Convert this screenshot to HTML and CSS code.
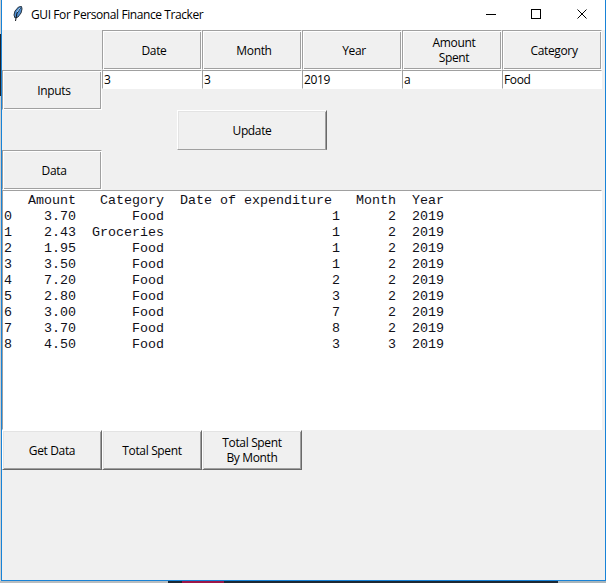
FILE: index.html
```html
<!DOCTYPE html>
<html lang="en">
<head>
<meta charset="utf-8">
<title>GUI For Personal Finance Tracker</title>
<link rel="stylesheet" href="styles.css">
</head>
<body>
<div class="desktop">
<main class="window">
  <header class="titlebar">
    <svg class="feather" width="10" height="16" viewBox="0 0 10 16">
      <path d="M8.5.5 5.5 1 2 5 1 9l1 3 3-1 3-4 1-4z" fill="#4f8ed0" stroke="#26323e"/>
      <path d="M7.500 2 4 7 2.500 15" fill="none" stroke="#10151c"/>
      <path d="M7 2 4 6" fill="none" stroke="#b9d8f2"/>
    </svg>
    <h1 class="title">GUI For Personal Finance Tracker</h1>
    <svg class="controls" width="102" height="12" viewBox="0 0 102 12" fill="none" stroke="#000">
      <path d="M0 6.500h10M45.500 1.500h9v9h-9z" shape-rendering="crispEdges"/>
      <path d="M91.500 1.500l9 9M100.500 1.500l-9 9"/>
    </svg>
  </header>
  <div class="grid">
    <div class="label date">Date</div>
    <div class="label">Month</div>
    <div class="label">Year</div>
    <div class="label">Amount<br>Spent</div>
    <div class="label">Category</div>
    <div class="label inputs">Inputs</div>
    <div class="entry">3</div>
    <div class="entry">3</div>
    <div class="entry">2019</div>
    <div class="entry">a</div>
    <div class="entry">Food</div>
    <button class="button update">Update</button>
    <div class="label data">Data</div>
    <pre class="output">   Amount   Category  Date of expenditure   Month  Year
0    3.70       Food                     1      2  2019
1    2.43  Groceries                     1      2  2019
2    1.95       Food                     1      2  2019
3    3.50       Food                     1      2  2019
4    7.20       Food                     2      2  2019
5    2.80       Food                     3      2  2019
6    3.00       Food                     7      2  2019
7    3.70       Food                     8      2  2019
8    4.50       Food                     3      3  2019</pre>
    <button class="button">Get Data</button>
    <button class="button">Total Spent</button>
    <button class="button">Total Spent<br>By Month</button>
  </div>
</main>
</div>
</body>
</html>
```
FILE: styles.css
```css
* { box-sizing: border-box; }
body {
  margin: 0;
  overflow: hidden;
  font: 12px/15px "Open Sans", "Noto Sans", sans-serif;
  letter-spacing: -0.35px;
  color: #000;
}
.desktop {
  height: 583px;
  padding-left: 1px;
  background:
    linear-gradient(#20242b, #20242b) 0 34px / 1px 62px no-repeat,
    linear-gradient(90deg, #b9bdc0 168px, #1d2833 168px 182px, #9c1748 182px 224px, #1d2833 224px 558px, #a9b5bb 558px) 0 581px / 606px 2px no-repeat,
    #cfcfcf;
}
.window {
  width: 605px;
  height: 581px;
  border: solid #1883d7;
  border-width: 0 1px 1px;
  background: #f0f0f0;
}
.titlebar {
  display: flex;
  align-items: flex-start;
  height: 30px;
  background: #fff;
}
.feather { margin: 6px 0 0 11px; }
.title {
  flex: 1;
  margin: 7px 0 0 8px;
  font-size: 12px;
  font-weight: 400;
  letter-spacing: -0.41px;
  white-space: nowrap;
}
.controls { margin: 8px 17px 0 0; }
.grid {
  display: grid;
  grid-template-columns: repeat(6, 100px);
  grid-template-rows: 40px 40px 40px 40px 240px 40px;
}
.label, .button {
  display: flex;
  align-items: center;
  justify-content: center;
  text-align: center;
}
.label {
  padding: 0 0 0 4px;
  border: 1px solid;
  border-color: #a0a0a0 #fff #fff #a0a0a0;
  box-shadow: inset 1px 1px #fff, inset -1px -1px #a0a0a0;
}
.date { grid-column: 2; }
.inputs, .data { grid-column: 1; }
.entry {
  height: 19px;
  padding: 1px 0 0 1px;
  border: 1px solid;
  border-color: #a0a0a0 #fff #fff #a0a0a0;
  background: #fff;
}
.button {
  padding: 0;
  border: 1px solid;
  border-color: #fff #696969 #696969 #fff;
  box-shadow: inset 1px 1px #e3e3e3, inset -1px -1px #a0a0a0;
  background: #f0f0f0;
  font: inherit;
  letter-spacing: inherit;
  color: inherit;
}
.update {
  grid-column: 2 / 5;
  width: 150px;
  justify-self: center;
  border-bottom-color: #a0a0a0;
  box-shadow: inset 1px 1px #e3e3e3, inset -1px 0 #a0a0a0;
}
.output {
  grid-column: 1 / -1;
  margin: 0;
  padding: 2px 1px 1px;
  border: 1px solid;
  border-color: #a0a0a0 #fff #fff #a0a0a0;
  background: #fff;
  font: 13.333px/16px "Liberation Mono", monospace;
  letter-spacing: 0;
  color: #101018;
}
```
